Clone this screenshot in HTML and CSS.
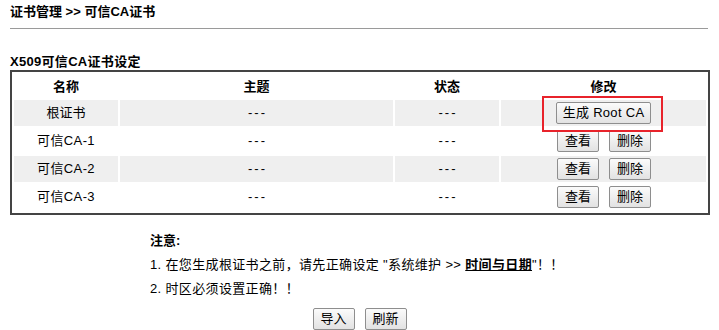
FILE: index.html
```html
<!DOCTYPE html>
<html lang="zh-CN">
<head>
<meta charset="utf-8">
<title>可信CA证书</title>
<link rel="stylesheet" href="styles.css">
</head>
<body>
<div class="crumb">证书管理 &gt;&gt; 可信CA证书</div>
<div class="rule"></div>
<div class="section-title">X509可信CA证书设定</div>
<div class="box">
  <table class="grid">
    <colgroup>
      <col class="c1"><col class="c2"><col class="c3"><col class="c4">
    </colgroup>
    <thead>
      <tr><th>名称</th><th>主题</th><th>状态</th><th>修改</th></tr>
    </thead>
    <tbody>
      <tr class="alt">
        <td>根证书</td><td><span class="dash">---</span></td><td><span class="dash">---</span></td>
        <td><span class="highlight"><button class="btn">生成 Root CA</button></span></td>
      </tr>
      <tr>
        <td class="name">可信CA-1</td><td><span class="dash">---</span></td><td><span class="dash">---</span></td>
        <td><div class="btns"><button class="btn sq">查看</button><button class="btn sq">删除</button></div></td>
      </tr>
      <tr class="alt">
        <td class="name">可信CA-2</td><td><span class="dash">---</span></td><td><span class="dash">---</span></td>
        <td><div class="btns"><button class="btn sq">查看</button><button class="btn sq">删除</button></div></td>
      </tr>
      <tr>
        <td class="name">可信CA-3</td><td><span class="dash">---</span></td><td><span class="dash">---</span></td>
        <td><div class="btns"><button class="btn sq">查看</button><button class="btn sq">删除</button></div></td>
      </tr>
    </tbody>
  </table>
</div>
<div class="notes">
  <div class="note-head">注意:</div>
  <div class="note">1. 在您生成根证书之前，请先正确设定 "系统维护 &gt;&gt; <a class="link" href="#">时间与日期</a>"！！</div>
  <div class="note">2. 时区必须设置正确！！</div>
</div>
<div class="actions">
  <button class="btn sq">导入</button>
  <button class="btn sq">刷新</button>
</div>
</body>
</html>
```
FILE: styles.css
```css
html, body {
  margin: 0;
  padding: 0;
  background: #fff;
}
body {
  font-family: "Liberation Sans", "Noto Sans CJK SC", sans-serif;
  font-size: 13px;
  color: #000;
  width: 719px;
}
.crumb {
  font-weight: bold;
  font-size: 13px;
  line-height: 16px;
  padding: 4px 10px 0;
  height: 24px;
}
.rule {
  margin: 0 10px;
  width: 698px;
  border-top: 1px solid #9a9a9a;
  height: 0;
}
.section-title {
  font-weight: bold;
  margin: 25px 10px 0;
  line-height: 16px;
  letter-spacing: 0.3px;
}
.box {
  margin: 0 10px;
  width: 696px;
  border: 2px solid #444;
  padding: 1px 0;
}
.grid {
  width: 100%;
  border-collapse: separate;
  border-spacing: 2px;
  table-layout: fixed;
}
.c1 { width: 104px; }
.c2 { width: 273px; }
.c3 { width: 104px; }
.grid th {
  height: 22px;
  padding: 1px 0 0;
  font-weight: bold;
  text-align: center;
  vertical-align: middle;
  line-height: 16px;
}
.grid td {
  height: 26px;
  padding: 0;
  text-align: center;
  vertical-align: middle;
  line-height: 16px;
}
.grid td.name {
  letter-spacing: 0.4px;
}
.grid tr.alt td {
  background: #efefef;
}
.dash {
  letter-spacing: 2px;
  margin-right: -2px;
}
.btn {
  font-family: "Liberation Sans", "Noto Sans CJK SC", sans-serif;
  font-size: 13px;
  height: 22px;
  padding: 0 9px;
  line-height: 18px;
  color: #000;
  background: linear-gradient(#fbfbfb, #e2e2e2);
  border: 1px solid #8e8e8e;
  border-radius: 2px;
  margin: 0;
  box-sizing: border-box;
  vertical-align: middle;
}
.btn.sq {
  width: 42px;
  padding: 0;
}
.btns {
  display: flex;
  justify-content: center;
  gap: 10px;
  margin-left: 1px;
}
.highlight {
  position: relative;
  display: inline-block;
  vertical-align: middle;
}
.highlight .btn {
  width: 95px;
  padding: 0;
  display: block;
  letter-spacing: 0.3px;
}
.highlight::after {
  content: "";
  position: absolute;
  left: -14px;
  right: -12px;
  top: -6px;
  bottom: -8px;
  border: 2px solid #e8232b;
  pointer-events: none;
}
.notes {
  margin: 14px 0 0 150px;
  line-height: 24px;
}
.note {
  letter-spacing: 0.35px;
}
.note-head {
  font-weight: bold;
}
.link {
  color: #000;
  font-weight: bold;
  text-decoration: underline;
}
.actions {
  display: flex;
  justify-content: center;
  gap: 10px;
  margin-top: 7px;
}
```
